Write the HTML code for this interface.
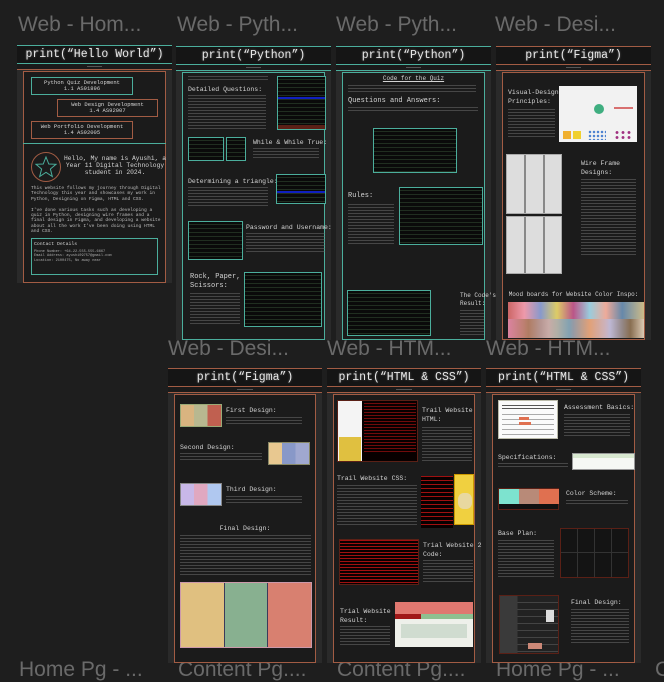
<!DOCTYPE html>
<html><head><meta charset="utf-8"><style>
*{margin:0;padding:0;box-sizing:border-box}
body{width:664px;height:678px;background:#1e1e1e;position:relative;overflow:hidden;font-family:"Liberation Mono",monospace}
.l{position:absolute;font:21px "Liberation Sans",sans-serif;color:#6a6a6a;white-space:nowrap;line-height:24px}
.c{position:absolute;background:#2a2a2a}
.h{position:absolute;left:0;right:0;top:0;height:19px;background:#151515;border-top:1px solid var(--a);border-bottom:1px solid var(--a);color:#e8e8e8;font-size:11.5px;text-align:center;line-height:17px;text-shadow:0 0 2px rgba(255,255,255,.35)}
.n{position:absolute;left:0;right:0;top:19px;height:6px;background:#1a1a1a;border-bottom:1px solid var(--a)}
.n:after{content:"";position:absolute;left:45%;width:10%;top:2px;height:1px;background:#555}
.p{position:absolute;left:6px;right:6px;top:26px;bottom:0;background:#1b1b1b;border:1px solid var(--b)}
.t{position:absolute;color:#d4d4d4;font-size:6.5px;line-height:8px;white-space:nowrap}
.x{position:absolute;background:repeating-linear-gradient(to bottom,#707070 0 1px,transparent 1px 3px);opacity:.5}
.i{position:absolute;border:1px solid var(--a)}
.k{background:#0a0a0a;background-image:repeating-linear-gradient(to bottom,transparent 0 2px,rgba(90,140,90,.28) 2px 3px,transparent 3px 4px)}
.tl{--a:#4bae9c;--b:#4bae9c}
.or{--a:#a25c44;--b:#a25c44}
</style></head><body>

<div class="l" style="left:18px;top:13px">Web - Hom...</div>
<div class="l" style="left:177px;top:13px">Web - Pyth...</div>
<div class="l" style="left:336px;top:13px">Web - Pyth...</div>
<div class="l" style="left:495px;top:13px">Web - Desi...</div>
<div class="l" style="left:168px;top:337px">Web - Desi...</div>
<div class="l" style="left:327px;top:337px">Web - HTM...</div>
<div class="l" style="left:486px;top:337px">Web - HTM...</div>
<div class="l" style="left:19px;top:658px">Home Pg - ...</div>
<div class="l" style="left:178px;top:658px">Content Pg....</div>
<div class="l" style="left:337px;top:658px">Content Pg....</div>
<div class="l" style="left:496px;top:658px">Home Pg - ...</div>
<div class="l" style="left:655px;top:658px">C</div>

<!-- Card 1 -->
<div class="c tl" style="left:17px;top:45px;width:155px;height:238px;--b:#a25c44">
<div class="h">print(“Hello World”)</div><div class="n" style="border-color:#a25c44"></div>
<div class="p" style="bottom:0"></div>
<div style="position:absolute;left:6px;right:6px;top:98px;height:1px;background:#4bae9c"></div>
<div class="i" style="left:14px;top:32px;width:102px;height:18px;border-color:#4bae9c"><div class="t" style="left:0;right:0;text-align:center;top:2px;font-size:5.5px;line-height:6px">Python Quiz Development<br>1.1 AS91896</div></div>
<div class="i" style="left:40px;top:54px;width:101px;height:18px;border-color:#a25c44"><div class="t" style="left:0;right:0;text-align:center;top:2px;font-size:5.5px;line-height:6px">Web Design Development<br>1.4 AS92007</div></div>
<div class="i" style="left:14px;top:76px;width:102px;height:18px;border-color:#a25c44"><div class="t" style="left:0;right:0;text-align:center;top:2px;font-size:5.5px;line-height:6px">Web Portfolio Development<br>1.4 AS92005</div></div>
<div style="position:absolute;left:14px;top:107px;width:30px;height:30px;border:1px solid #a25c44;border-radius:50%"></div>
<svg style="position:absolute;left:17px;top:110px" width="24" height="24" viewBox="0 0 24 24"><polygon points="12,2 14.8,9 22,9.3 16.4,14 18.3,21.5 12,17.3 5.7,21.5 7.6,14 2,9.3 9.2,9" fill="none" stroke="#4bae9c" stroke-width="1"/></svg>
<div class="t" style="left:47px;top:110px;font-size:6.3px;text-align:center;line-height:7px">Hello, My name is Ayushi, a<br>Year 11 Digital Technology<br>student in 2024.</div>
<div class="t" style="left:14px;top:141px;font-size:4.6px;line-height:5.4px;color:#bbb">This website follows my journey through Digital<br>Technology this year and showcases my work in<br>Python, Designing on Figma, HTML and CSS.<br><br>I've done various tasks such as developing a<br>quiz in Python, designing wire frames and a<br>final design in Figma, and developing a website<br>about all the work I've been doing using HTML<br>and CSS.</div>
<div class="i" style="left:14px;top:193px;width:127px;height:37px;border-color:#4bae9c"><div class="t" style="left:2px;top:2px;font-size:4.8px">Contact Details</div><div class="t" style="left:2px;top:11px;font-size:3.6px;line-height:4.4px;color:#aaa">Phone Number: +64-22-555-555-6667<br>Email Address: ayushi09757@gmail.com<br>Location: 2100475, No away near</div></div>
</div>

<!-- Card 2 -->
<div class="c tl" style="left:176px;top:46px;width:155px;height:294px">
<div class="h">print(“Python”)</div><div class="n"></div><div class="p"></div>
<div class="x" style="left:12px;top:30px;width:80px;height:5px"></div>
<div class="t" style="left:12px;top:40px">Detailed Questions:</div>
<div class="x" style="left:12px;top:49px;width:78px;height:36px"></div>
<div class="i k" style="left:101px;top:30px;width:49px;height:54px"><div style="position:absolute;left:0;right:0;top:20px;height:2px;background:#1020c0"></div><div style="position:absolute;left:0;right:0;bottom:0;height:4px;background:#5a2016"></div></div>
<div class="i k" style="left:12px;top:91px;width:36px;height:24px"></div>
<div class="i k" style="left:50px;top:91px;width:20px;height:24px"></div>
<div class="t" style="left:77px;top:93px">While &amp; While True:</div>
<div class="x" style="left:77px;top:102px;width:66px;height:12px"></div>
<div class="t" style="left:12px;top:132px">Determining a triangle:</div>
<div class="x" style="left:12px;top:141px;width:80px;height:19px"></div>
<div class="i k" style="left:100px;top:128px;width:50px;height:30px"><div style="position:absolute;left:0;right:0;top:16px;height:2px;background:#1020c0"></div></div>
<div class="i k" style="left:12px;top:175px;width:55px;height:39px"></div>
<div class="t" style="left:70px;top:178px">Password and Username:</div>
<div class="x" style="left:70px;top:187px;width:79px;height:21px"></div>
<div class="t" style="left:14px;top:227px;font-size:7px;line-height:9px">Rock, Paper,<br>Scissors:</div>
<div class="x" style="left:14px;top:247px;width:50px;height:32px"></div>
<div class="i k" style="left:68px;top:226px;width:78px;height:55px"></div>
</div>

<!-- Card 3 -->
<div class="c tl" style="left:336px;top:46px;width:155px;height:294px">
<div class="h">print(“Python”)</div><div class="n"></div><div class="p"></div>
<div class="t" style="left:0;right:0;text-align:center;top:29px;font-size:6px;text-decoration:underline">Code for the Quiz</div>
<div class="x" style="left:12px;top:39px;width:128px;height:8px"></div>
<div class="t" style="left:12px;top:51px;font-size:7px">Questions and Answers:</div>
<div class="x" style="left:12px;top:61px;width:130px;height:6px"></div>
<div class="i k" style="left:37px;top:82px;width:84px;height:45px"></div>
<div class="t" style="left:12px;top:146px;font-size:7px">Rules:</div>
<div class="x" style="left:12px;top:158px;width:46px;height:40px"></div>
<div class="i k" style="left:63px;top:141px;width:84px;height:58px"></div>
<div class="i k" style="left:11px;top:244px;width:84px;height:46px"></div>
<div class="t" style="left:124px;top:246px;font-size:6px;line-height:8px">The Code's<br>Result:</div>
<div class="x" style="left:124px;top:264px;width:24px;height:26px"></div>
</div>

<!-- Card 4 -->
<div class="c or" style="left:496px;top:46px;width:155px;height:294px">
<div class="h">print(“Figma”)</div><div class="n"></div><div class="p"></div>
<div class="t" style="left:12px;top:42px;font-size:6.5px;line-height:9px">Visual-Design<br>Principles:</div>
<div class="x" style="left:12px;top:63px;width:47px;height:30px"></div>
<div style="position:absolute;left:63px;top:40px;width:78px;height:56px;background:#f2f2f2">
 <div style="position:absolute;left:35px;top:18px;width:10px;height:10px;border-radius:50%;background:#3fae80"></div>
 <div style="position:absolute;left:55px;top:21px;width:19px;height:2px;background:#d87070"></div>
 <div style="position:absolute;left:4px;top:45px;width:8px;height:8px;background:#f0b030"></div>
 <div style="position:absolute;left:14px;top:45px;width:8px;height:8px;background:#f0d030"></div>
 <div style="position:absolute;left:29px;top:44px;width:18px;height:10px;background:radial-gradient(circle,#4a80d0 1px,transparent 1.5px) 0 0/4px 4px"></div>
 <div style="position:absolute;left:55px;top:44px;width:18px;height:10px;background:radial-gradient(circle,#a03080 1.2px,transparent 1.7px) 0 0/6px 5px"></div>
</div>
<div style="position:absolute;left:10px;top:108px;width:56px;height:60px;background:repeating-linear-gradient(to right,#ddd 0 17px,#888 17px 19px);border:1px solid #aaa"></div>
<div style="position:absolute;left:10px;top:170px;width:56px;height:58px;background:repeating-linear-gradient(to right,#ddd 0 17px,#888 17px 19px);border:1px solid #aaa"></div>
<div class="t" style="left:85px;top:113px;font-size:6.5px;line-height:9px">Wire Frame<br>Designs:</div>
<div class="x" style="left:85px;top:133px;width:55px;height:78px"></div>
<div class="t" style="left:0;right:0;text-align:center;top:245px;font-size:6px">Mood boards for Website Color Inspo:</div>
<div style="position:absolute;left:12px;top:256px;width:136px;height:36px;background:linear-gradient(90deg,#c66 0,#e9a 12%,#89c 24%,#dc6 36%,#b58 48%,#9cd 60%,#ea9 72%,#68a 84%,#cb8 100%)"></div>
<div style="position:absolute;left:12px;top:273px;width:136px;height:19px;background:linear-gradient(90deg,#d8a 0,#a75 15%,#caa 30%,#7ab 45%,#e96 60%,#bbd 75%,#864 90%,#dcb 100%);opacity:.85"></div>
</div>

<!-- Card 5 -->
<div class="c or" style="left:168px;top:368px;width:154px;height:295px">
<div class="h">print(“Figma”)</div><div class="n"></div><div class="p"></div>
<div style="position:absolute;left:12px;top:36px;width:42px;height:23px;background:linear-gradient(90deg,#d9b480 0 33%,#b8b890 33% 66%,#c06050 66%);border:1px solid #9a7"></div>
<div class="t" style="left:58px;top:39px">First Design:</div>
<div class="x" style="left:58px;top:49px;width:76px;height:8px"></div>
<div class="t" style="left:12px;top:76px">Second Design:</div>
<div class="x" style="left:12px;top:85px;width:82px;height:8px"></div>
<div style="position:absolute;left:100px;top:74px;width:42px;height:23px;background:linear-gradient(90deg,#e8c890 0 33%,#8898c8 33% 66%,#a0a8d0 66%);border:1px solid #886"></div>
<div style="position:absolute;left:12px;top:115px;width:42px;height:23px;background:linear-gradient(90deg,#c8b8e8 0 33%,#e0a8c0 33% 66%,#b0c8f0 66%);border:1px solid #888"></div>
<div class="t" style="left:58px;top:118px">Third Design:</div>
<div class="x" style="left:58px;top:128px;width:76px;height:8px"></div>
<div class="t" style="left:0;right:0;text-align:center;top:157px">Final Design:</div>
<div class="x" style="left:12px;top:167px;width:131px;height:40px"></div>
<div style="position:absolute;left:12px;top:214px;width:132px;height:66px;background:linear-gradient(90deg,#e0c080 0 33%,#3a3a5a 33% 34%,#88b090 34% 66%,#3a3a5a 66% 67%,#d88070 67%);border:1px solid #c9a"></div>
</div>

<!-- Card 6 -->
<div class="c or" style="left:327px;top:368px;width:154px;height:295px">
<div class="h">print(“HTML &amp; CSS”)</div><div class="n"></div><div class="p"></div>
<div style="position:absolute;left:10px;top:32px;width:81px;height:62px;background:#080000;border:1px solid #5a2016"><div style="position:absolute;left:0;top:0;width:24px;height:60px;background:#f4f4f4"></div><div style="position:absolute;left:1px;top:36px;width:22px;height:24px;background:#e0c040"></div><div style="position:absolute;left:26px;top:2px;width:52px;height:50px;background:repeating-linear-gradient(to bottom,#a01010 0 1px,transparent 1px 3px);opacity:.7"></div></div>
<div class="t" style="left:95px;top:38px;line-height:9px">Trail Website<br>HTML:</div>
<div class="x" style="left:95px;top:59px;width:50px;height:35px"></div>
<div class="t" style="left:10px;top:107px">Trail Website CSS:</div>
<div class="x" style="left:10px;top:117px;width:80px;height:42px"></div>
<div style="position:absolute;left:94px;top:108px;width:32px;height:52px;background:#080000;background-image:repeating-linear-gradient(to bottom,#a01010 0 1px,transparent 1px 4px)"></div>
<div style="position:absolute;left:127px;top:106px;width:20px;height:51px;background:#f0d040;border:1px solid #c90"><div style="position:absolute;left:3px;top:18px;width:14px;height:16px;background:#e8d8a0;border-radius:40%"></div></div>
<div style="position:absolute;left:12px;top:171px;width:80px;height:46px;background:#080000;background-image:repeating-linear-gradient(to bottom,#a01010 0 1px,transparent 1px 3px);border:1px solid #5a2016"></div>
<div class="t" style="left:96px;top:173px;line-height:9px">Trial Website 2<br>Code:</div>
<div class="x" style="left:96px;top:192px;width:50px;height:22px"></div>
<div class="t" style="left:13px;top:239px;line-height:9px">Trial Website 2<br>Result:</div>
<div class="x" style="left:13px;top:258px;width:50px;height:20px"></div>
<div style="position:absolute;left:68px;top:234px;width:78px;height:45px;background:#eef0ea"><div style="position:absolute;left:0;right:0;top:0;height:12px;background:#e07870"></div><div style="position:absolute;left:0;top:12px;width:26px;height:5px;background:#a01818"></div><div style="position:absolute;left:26px;right:0;top:12px;height:5px;background:#8fc090"></div><div style="position:absolute;left:6px;right:6px;top:22px;height:14px;background:#d0dcd0"></div></div>
</div>

<!-- Card 7 -->
<div class="c or" style="left:486px;top:368px;width:155px;height:295px">
<div class="h">print(“HTML &amp; CSS”)</div><div class="n"></div><div class="p"></div>
<div style="position:absolute;left:12px;top:32px;width:60px;height:39px;background:#fafafa;border:1px solid #bba"><div style="position:absolute;left:3px;top:4px;right:3px;height:6px;background:repeating-linear-gradient(to bottom,#555 0 1px,transparent 1px 3px)"></div><div style="position:absolute;left:3px;top:13px;right:3px;bottom:3px;background:repeating-linear-gradient(to bottom,#aaa 0 1px,transparent 1px 5px)"></div><div style="position:absolute;left:20px;top:16px;width:10px;height:3px;background:#e07050"></div><div style="position:absolute;left:20px;top:21px;width:12px;height:3px;background:#e07050"></div></div>
<div class="t" style="left:78px;top:36px">Assessment Basics:</div>
<div class="x" style="left:78px;top:46px;width:66px;height:22px"></div>
<div class="t" style="left:12px;top:86px">Specifications:</div>
<div class="x" style="left:12px;top:95px;width:70px;height:6px"></div>
<div style="position:absolute;left:86px;top:85px;width:63px;height:17px;background:#f6f8f4;border:1px solid #999"><div style="position:absolute;left:0;right:0;top:0;height:4px;background:#d8e8d0"></div></div>
<div style="position:absolute;left:12px;top:120px;width:61px;height:22px;background:#111;border:1px solid #5a2016"><div style="position:absolute;left:0;top:0;width:20px;height:15px;background:#7de3cf"></div><div style="position:absolute;left:20px;top:0;width:20px;height:15px;background:#b88a78"></div><div style="position:absolute;left:40px;top:0;width:20px;height:15px;background:#e07050"></div></div>
<div class="t" style="left:80px;top:122px">Color Scheme:</div>
<div class="x" style="left:80px;top:132px;width:62px;height:6px"></div>
<div class="t" style="left:12px;top:162px">Base Plan:</div>
<div class="x" style="left:12px;top:172px;width:56px;height:38px"></div>
<div style="position:absolute;left:74px;top:160px;width:69px;height:50px;background:#141414;border:1px solid #5a2016;background-image:repeating-linear-gradient(90deg,transparent 0 16px,#333 16px 17px),linear-gradient(#141414 48%,#333 48% 50%,#141414 50%)"></div>
<div style="position:absolute;left:13px;top:227px;width:60px;height:59px;background:#222;border:1px solid #5a2016;background-image:linear-gradient(90deg,#3a3a3a 0 30%,transparent 30%),repeating-linear-gradient(to bottom,transparent 0 6px,#444 6px 7px)"><div style="position:absolute;right:4px;top:14px;width:8px;height:12px;background:#ddd"></div><div style="position:absolute;left:28px;bottom:4px;width:14px;height:6px;background:#c87"></div></div>
<div class="t" style="left:85px;top:231px">Final Design:</div>
<div class="x" style="left:85px;top:241px;width:58px;height:36px"></div>
</div>

</body></html>
